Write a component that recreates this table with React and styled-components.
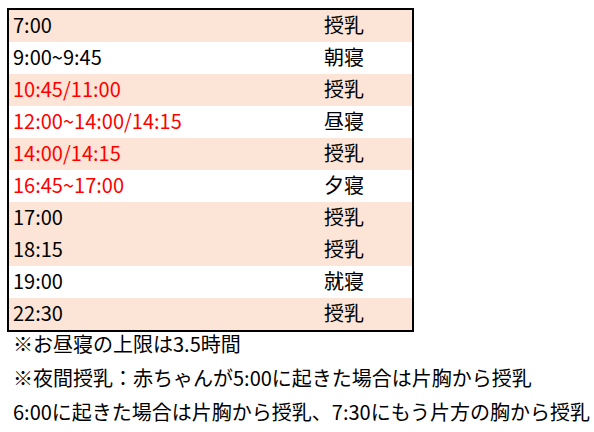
import React from "react";
import styled, { createGlobalStyle } from "styled-components";

const GlobalStyle = createGlobalStyle`
  body {
    margin: 0;
    background: #ffffff;
    font-family: "Noto Sans CJK JP", "Noto Sans", sans-serif;
    color: #000000;
  }
`;

const Page = styled.div`
  width: 594px;
  height: 432px;
  padding: 8px 0 0 7px;
  box-sizing: border-box;
`;

const Table = styled.div`
  width: 407px;
  border: 2px solid #000000;
  box-sizing: border-box;
`;

const Row = styled.div`
  display: grid;
  grid-template-columns: 311px 1fr;
  height: 32px;
  line-height: 30px;
  font-size: 20px;
  background-color: ${(p) => (p.$shaded ? "#fce4d6" : "#ffffff")};
  color: ${(p) => (p.$red ? "#ff0000" : "#000000")};
`;

const Cell = styled.div`
  padding-left: 4px;
  white-space: nowrap;
`;

const Label = styled.div`
  padding-left: 4px;
  color: #000000;
  white-space: nowrap;
`;

const Notes = styled.div`
  display: flex;
  flex-direction: column;
  gap: 12px;
  padding: 1px 0 0 6px;
`;

const Note = styled.div`
  font-size: 20px;
  line-height: 22px;
  white-space: nowrap;
`;

const rows = [
  { time: "7:00", label: "授乳", shaded: true },
  { time: "9:00~9:45", label: "朝寝" },
  { time: "10:45/11:00", label: "授乳", shaded: true, red: true },
  { time: "12:00~14:00/14:15", label: "昼寝", red: true },
  { time: "14:00/14:15", label: "授乳", shaded: true, red: true },
  { time: "16:45~17:00", label: "夕寝", red: true },
  { time: "17:00", label: "授乳", shaded: true },
  { time: "18:15", label: "授乳", shaded: true },
  { time: "19:00", label: "就寝" },
  { time: "22:30", label: "授乳", shaded: true },
];

const App = () => {
  return (
    <>
      <GlobalStyle />
      <Page>
        <Table>
          {rows.map((r, i) => (
            <Row key={i} $shaded={r.shaded} $red={r.red}>
              <Cell>{r.time}</Cell>
              <Label>{r.label}</Label>
            </Row>
          ))}
        </Table>
        <Notes>
          <Note>※お昼寝の上限は3.5時間</Note>
          <Note>※夜間授乳：赤ちゃんが5:00に起きた場合は片胸から授乳</Note>
          <Note>6:00に起きた場合は片胸から授乳、7:30にもう片方の胸から授乳</Note>
        </Notes>
      </Page>
    </>
  );
};

export default App;
